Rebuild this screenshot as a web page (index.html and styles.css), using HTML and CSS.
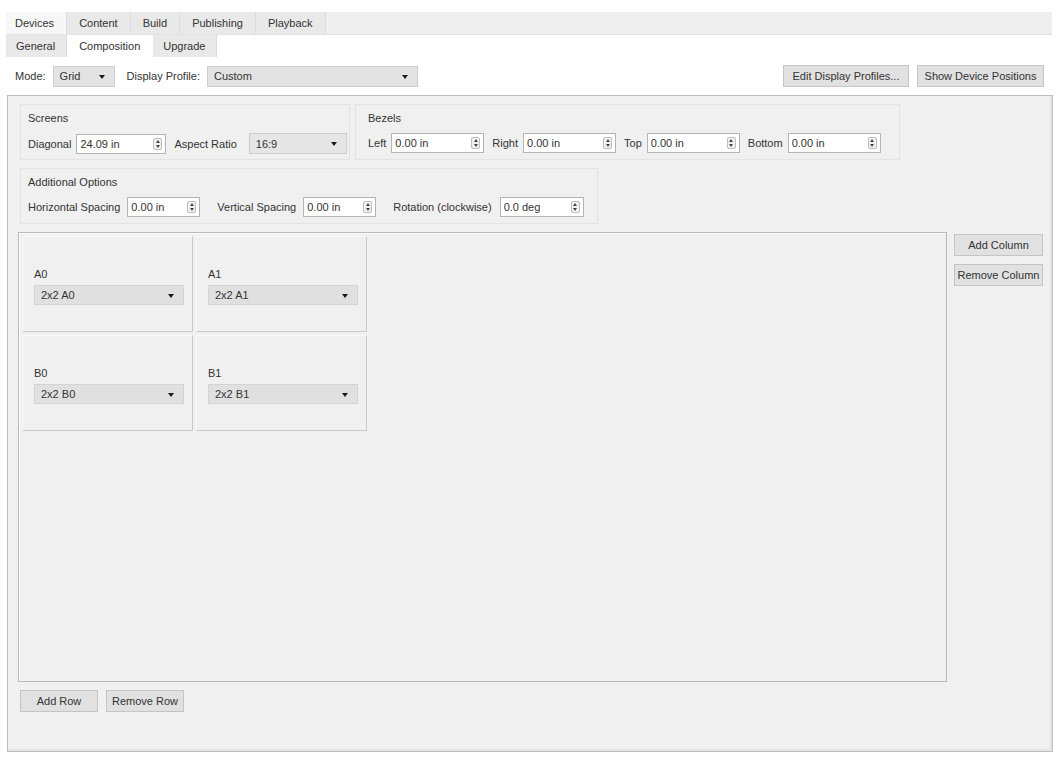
FILE: index.html
```html
<!DOCTYPE html>
<html lang="en">
<head>
  <meta charset="UTF-8" />
  <title>Devices - Composition</title>
  <link rel="stylesheet" href="styles.css">
</head>
<body>

  <div class="tabs main-tabs">
    <div class="tab active">Devices</div>
    <div class="tab">Content</div>
    <div class="tab">Build</div>
    <div class="tab">Publishing</div>
    <div class="tab">Playback</div>
  </div>

  <div class="tabs sub-tabs">
    <div class="tab">General</div>
    <div class="tab active">Composition</div>
    <div class="tab">Upgrade</div>
  </div>

  <div class="toolbar">
    <span class="lbl">Mode:</span>
    <div class="combo combo-mode">Grid<span class="arrow"></span></div>
    <span class="lbl lbl-profile">Display Profile:</span>
    <div class="combo combo-profile">Custom<span class="arrow"></span></div>
    <div class="spacer"></div>
    <button class="btn btn-edit">Edit Display Profiles...</button>
    <button class="btn btn-show">Show Device Positions</button>
  </div>

  <div class="panel">
    <div class="group-row">
      <div class="group group-screens">
        <div class="group-title">Screens</div>
        <div class="fields">
          <span class="lbl">Diagonal</span>
          <div class="spin w-diag">24.09 in<span class="spin-btn"></span></div>
          <span class="lbl gap-l">Aspect Ratio</span>
          <div class="combo combo-aspect">16:9<span class="arrow"></span></div>
        </div>
      </div>
      <div class="group group-bezels">
        <div class="group-title">Bezels</div>
        <div class="fields">
          <span class="lbl">Left</span>
          <div class="spin w-bezel">0.00 in<span class="spin-btn"></span></div>
          <span class="lbl gap-l">Right</span>
          <div class="spin w-bezel">0.00 in<span class="spin-btn"></span></div>
          <span class="lbl gap-l">Top</span>
          <div class="spin w-bezel">0.00 in<span class="spin-btn"></span></div>
          <span class="lbl gap-l">Bottom</span>
          <div class="spin w-bezel">0.00 in<span class="spin-btn"></span></div>
        </div>
      </div>
    </div>

    <div class="group-row">
      <div class="group group-options">
        <div class="group-title">Additional Options</div>
        <div class="fields">
          <span class="lbl">Horizontal Spacing</span>
          <div class="spin w-space">0.00 in<span class="spin-btn"></span></div>
          <span class="lbl gap-xl">Vertical Spacing</span>
          <div class="spin w-space">0.00 in<span class="spin-btn"></span></div>
          <span class="lbl gap-xl">Rotation (clockwise)</span>
          <div class="spin w-rot">0.0 deg<span class="spin-btn"></span></div>
        </div>
      </div>
    </div>

    <div class="grid-area">
      <div class="grid-box">
        <div class="cells">
          <div class="cell">
            <div class="cell-name">A0</div>
            <div class="combo combo-cell">2x2 A0<span class="arrow"></span></div>
          </div>
          <div class="cell">
            <div class="cell-name">A1</div>
            <div class="combo combo-cell">2x2 A1<span class="arrow"></span></div>
          </div>
          <div class="cell">
            <div class="cell-name">B0</div>
            <div class="combo combo-cell">2x2 B0<span class="arrow"></span></div>
          </div>
          <div class="cell">
            <div class="cell-name">B1</div>
            <div class="combo combo-cell">2x2 B1<span class="arrow"></span></div>
          </div>
        </div>
      </div>
      <div class="col-buttons">
        <button class="btn btn-col">Add Column</button>
        <button class="btn btn-col">Remove Column</button>
      </div>
    </div>

    <div class="row-buttons">
      <button class="btn btn-row">Add Row</button>
      <button class="btn btn-row">Remove Row</button>
    </div>
  </div>

</body>
</html>
```

FILE: styles.css
```css
* {
  box-sizing: border-box;
}

body {
  margin: 0;
  background: #ffffff;
  font-family: 'Liberation Sans', Arial, sans-serif;
  font-size: 11px;
  color: #333333;
  width: 1062px;
  height: 759px;
  overflow: hidden;
}

/* tab bars */

.tabs {
  display: flex;
  margin-left: 6px;
  width: 1046px;
}

.main-tabs {
  margin-top: 12px;
  height: 23px;
  background: #efefef;
  border-bottom: 1px solid #e2e2e2;
}

.sub-tabs {
  height: 22px;
}

.tab {
  display: flex;
  align-items: center;
  padding: 0 12px;
  background: #e9e9e9;
  border-right: 1px solid #dcdcdc;
}

.main-tabs .tab.active {
  background: #f7f7f7;
  padding: 0 12px 0 9px;
}

.sub-tabs .tab {
  padding: 0 11px 0 10px;
}

.sub-tabs .tab.active {
  background: #ffffff;
  padding: 0 13px 0 12px;
  border-right: none;
}

/* toolbar */

.toolbar {
  display: flex;
  align-items: center;
  height: 22px;
  margin: 8px 0 0 0;
  padding: 0 18px 0 15px;
}

.spacer {
  flex: 1;
}

.lbl {
  white-space: nowrap;
}

.lbl-profile {
  margin-left: 12px;
}

/* combo boxes */

.combo {
  position: relative;
  height: 21px;
  display: flex;
  align-items: center;
  padding-left: 6px;
  background: #e3e3e3;
  border: 1px solid #cdcdcd;
  white-space: nowrap;
}

.arrow {
  position: absolute;
  right: 9px;
  top: 8px;
  width: 0;
  height: 0;
  border-left: 3.5px solid transparent;
  border-right: 3.5px solid transparent;
  border-top: 4px solid #1a1a1a;
}

.combo-mode {
  width: 62px;
  margin-left: 7px;
}

.combo-profile {
  width: 211px;
  margin-left: 7px;
}

.combo-aspect {
  width: 98px;
  margin-left: 12px;
  background: #e6e6e6;
}

/* buttons */

.btn {
  height: 22px;
  padding: 0;
  font-family: inherit;
  font-size: inherit;
  color: #333333;
  background: #e1e1e1;
  border: 1px solid #c4c4c4;
}

.btn-edit {
  width: 126px;
}

.btn-show {
  width: 127px;
  margin-left: 8px;
}

/* main panel */

.panel {
  margin: 8px 0 0 7px;
  width: 1046px;
  height: 657px;
  background: #f0f0f0;
  border: 1px solid #bdbdbd;
  box-shadow: inset -2px -2px 0 #e4e4e4;
  padding: 8px 8px 0 10px;
}

.group-row {
  display: flex;
  gap: 5px;
  margin: 0 0 8px 2px;
}

.group {
  height: 56px;
  border: 1px solid #e3e3e3;
  padding: 5px 0 0 7px;
}

.group-screens {
  width: 330px;
}

.group-bezels {
  width: 545px;
  padding-left: 12px;
}

.group-options {
  width: 578px;
}

.group-title {
  height: 16px;
  line-height: 16px;
}

.fields {
  display: flex;
  align-items: center;
  margin-top: 7px;
}

.gap-l {
  margin-left: 8px;
}

.gap-xl {
  margin-left: 17px;
}

/* spin boxes */

.spin {
  position: relative;
  height: 20px;
  display: flex;
  align-items: center;
  padding-left: 3px;
  margin-left: 5px;
  background: #ffffff;
  border: 1px solid #b4b4b4;
  white-space: nowrap;
}

.spin-btn {
  position: absolute;
  right: 3px;
  top: 3px;
  width: 9px;
  height: 12px;
  border: 1px solid #bdbdbd;
  border-radius: 2px;
  background: #f2f2f2;
}

.spin-btn::before,
.spin-btn::after {
  content: '';
  position: absolute;
  left: 1.5px;
  width: 0;
  height: 0;
  border-left: 2.5px solid transparent;
  border-right: 2.5px solid transparent;
}

.spin-btn::before {
  top: 1px;
  border-bottom: 3px solid #444;
}

.spin-btn::after {
  bottom: 1px;
  border-top: 3px solid #444;
}

.w-diag {
  width: 90px;
}

.w-bezel {
  width: 93px;
}

.w-space {
  width: 73px;
  margin-left: 7px;
}

.w-rot {
  width: 84px;
  margin-left: 8px;
}

/* grid of screens */

.grid-area {
  display: flex;
  gap: 7px;
}

.grid-box {
  width: 929px;
  height: 450px;
  border: 1px solid #b9b9b9;
  box-shadow: inset 1px 1px 0 #ffffff;
  padding: 3px 0 0 3px;
}

.cells {
  display: grid;
  grid-template-columns: 171px 171px;
  grid-auto-rows: 96px;
  gap: 3px;
}

.cell {
  display: flex;
  flex-direction: column;
  justify-content: center;
  padding: 4px 10px 0 11px;
  border-top: 1px solid #f8f8f8;
  border-left: 1px solid #f8f8f8;
  border-right: 1px solid #c9c9c9;
  border-bottom: 1px solid #c9c9c9;
}

.cell-name {
  margin-bottom: 5px;
}

.combo-cell {
  width: 150px;
  height: 20px;
  background: #e0e0e0;
  border-color: #d4d4d4;
}

.col-buttons {
  display: flex;
  flex-direction: column;
  gap: 8px;
  padding-top: 2px;
}

.btn-col {
  width: 89px;
}

.row-buttons {
  display: flex;
  gap: 8px;
  margin: 8px 0 0 2px;
}

.btn-row {
  width: 78px;
}
```
